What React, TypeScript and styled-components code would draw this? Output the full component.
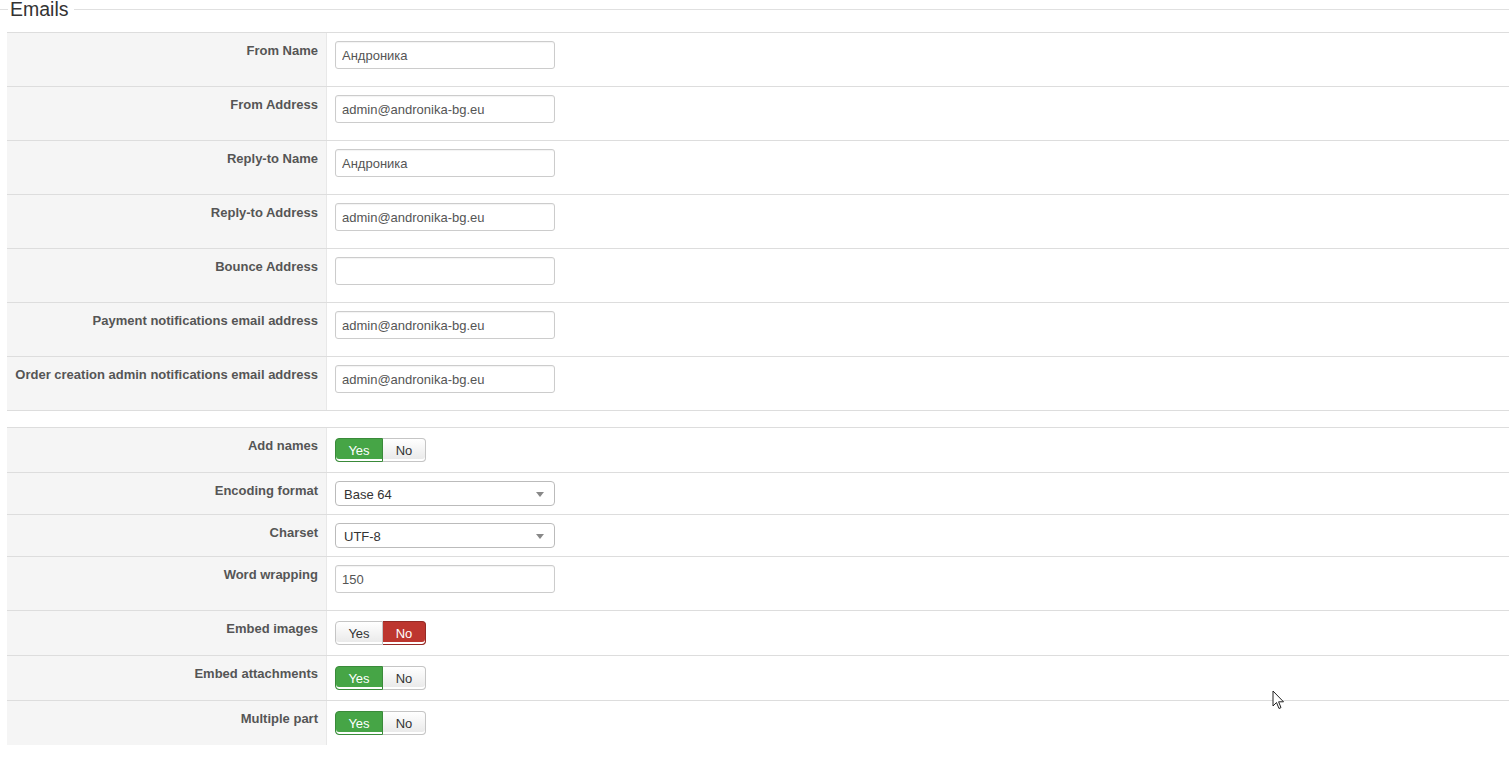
import React from 'react'
import styled, { createGlobalStyle, css } from 'styled-components'

const GlobalStyle = createGlobalStyle`
  html, body {
    margin: 0;
    padding: 0;
    background: #fff;
    font-family: "Liberation Sans", Arial, Helvetica, sans-serif;
    font-size: 13px;
    line-height: 18px;
    color: #333;
    overflow: hidden;
  }
`

const Page = styled.div`
  position: relative;
  width: 1509px;
  height: 757px;
`

const Legend = styled.div`
  display: flex;
  align-items: center;
  height: 16px;
  margin-bottom: 15px;
  padding-top: 1px;
  font-size: 19.5px;
  line-height: 16px;
  color: #333;

  &::before,
  &::after {
    content: '';
    height: 1px;
    background: #e0e0e0;
  }
  &::before {
    width: 8px;
    margin-right: 2px;
  }
  &::after {
    flex: 1;
    margin-left: 5px;
  }
`

const Table = styled.div<{ $closed?: boolean }>`
  margin-left: 7px;
  border-bottom: ${(p) => (p.$closed ? '1px solid #ddd' : 'none')};
  margin-bottom: 16px;
`

const Row = styled.div`
  display: grid;
  grid-template-columns: 320px 1fr;
  border-top: 1px solid #ddd;
`

const Label = styled.div`
  background: #f5f5f5;
  border-right: 1px solid #e8e8e8;
  padding: 9px 8px 7px 8px;
  text-align: right;
  font-weight: bold;
  color: #555;
  white-space: nowrap;
`

const Cell = styled.div`
  padding: 8px;
`

const TextInput = styled.input`
  display: block;
  box-sizing: border-box;
  width: 220px;
  height: 28px;
  margin: 0 0 9px;
  padding: 4px 6px;
  border: 1px solid #ccc;
  border-radius: 3px;
  font-family: inherit;
  font-size: 13px;
  color: #555;
  background: #fff;
  box-shadow: inset 0 1px 1px rgba(0, 0, 0, 0.05);
  outline: none;
`

const SelectBox = styled.div`
  position: relative;
  box-sizing: border-box;
  width: 220px;
  height: 25px;
  padding: 4px 8px 2px;
  border: 1px solid #bbb;
  border-radius: 4px;
  color: #333;
  background: #fff;

  &::after {
    content: '';
    position: absolute;
    right: 10px;
    top: 10px;
    border-left: 4px solid transparent;
    border-right: 4px solid transparent;
    border-top: 5px solid #888;
  }
`

const Toggle = styled.div`
  display: flex;
  margin: 2px 0;
  height: 24px;
`

const onStyles = {
  yes: css`
    background: #46a546;
    border-color: #3a8a3a;
    color: #fff;
  `,
  no: css`
    background: #bd362f;
    border-color: #942a25;
    color: #fff;
  `,
}

const ToggleButton = styled.div<{ $w: number; $on?: 'yes' | 'no' }>`
  box-sizing: border-box;
  width: ${(p) => p.$w}px;
  height: 24px;
  line-height: 23px;
  text-align: center;
  font-size: 13px;
  color: #333;
  border: 1px solid #c5c5c5;
  background: linear-gradient(#ffffff, #e8e8e8);
  box-shadow: inset 0 -2px 0 #fff;

  &:first-child {
    border-radius: 4px 0 0 4px;
  }
  &:last-child {
    border-radius: 0 4px 4px 0;
    border-left: none;
  }

  ${(p) => p.$on && onStyles[p.$on]}
`

const Pointer = styled.svg`
  position: absolute;
  left: 1272px;
  top: 690px;
`

type Field =
  | { kind: 'text'; label: string; value: string }
  | { kind: 'select'; label: string; value: string }
  | { kind: 'toggle'; label: string; value: boolean }

const senders: Field[] = [
  { kind: 'text', label: 'From Name', value: 'Андроника' },
  { kind: 'text', label: 'From Address', value: 'admin@andronika-bg.eu' },
  { kind: 'text', label: 'Reply-to Name', value: 'Андроника' },
  { kind: 'text', label: 'Reply-to Address', value: 'admin@andronika-bg.eu' },
  { kind: 'text', label: 'Bounce Address', value: '' },
  { kind: 'text', label: 'Payment notifications email address', value: 'admin@andronika-bg.eu' },
  { kind: 'text', label: 'Order creation admin notifications email address', value: 'admin@andronika-bg.eu' },
]

const options: Field[] = [
  { kind: 'toggle', label: 'Add names', value: true },
  { kind: 'select', label: 'Encoding format', value: 'Base 64' },
  { kind: 'select', label: 'Charset', value: 'UTF-8' },
  { kind: 'text', label: 'Word wrapping', value: '150' },
  { kind: 'toggle', label: 'Embed images', value: false },
  { kind: 'toggle', label: 'Embed attachments', value: true },
  { kind: 'toggle', label: 'Multiple part', value: true },
]

const Control: React.FC<{ field: Field }> = ({ field }) => {
  if (field.kind === 'text') {
    return <TextInput type="text" defaultValue={field.value} />
  }
  if (field.kind === 'select') {
    return <SelectBox>{field.value}</SelectBox>
  }
  return (
    <Toggle>
      <ToggleButton $w={48} $on={field.value ? 'yes' : undefined}>
        Yes
      </ToggleButton>
      <ToggleButton $w={43} $on={field.value ? undefined : 'no'}>
        No
      </ToggleButton>
    </Toggle>
  )
}

const FieldTable: React.FC<{ fields: Field[]; closed?: boolean }> = ({ fields, closed }) => (
  <Table $closed={closed}>
    {fields.map((f) => (
      <Row key={f.label}>
        <Label>{f.label}</Label>
        <Cell>
          <Control field={f} />
        </Cell>
      </Row>
    ))}
  </Table>
)

const App: React.FC = () => {
  return (
    <Page>
      <GlobalStyle />
      <Legend>Emails</Legend>
      <FieldTable fields={senders} closed />
      <FieldTable fields={options} />
      <Pointer width="13" height="20" viewBox="0 0 13 20">
        <path d="M1 1 L1 16 L4.5 12.5 L7 18.5 L9 17.6 L6.6 11.8 L11.5 11.8 Z" fill="#fff" stroke="#222" strokeWidth="1" strokeLinejoin="round" />
      </Pointer>
    </Page>
  )
}

export default App
